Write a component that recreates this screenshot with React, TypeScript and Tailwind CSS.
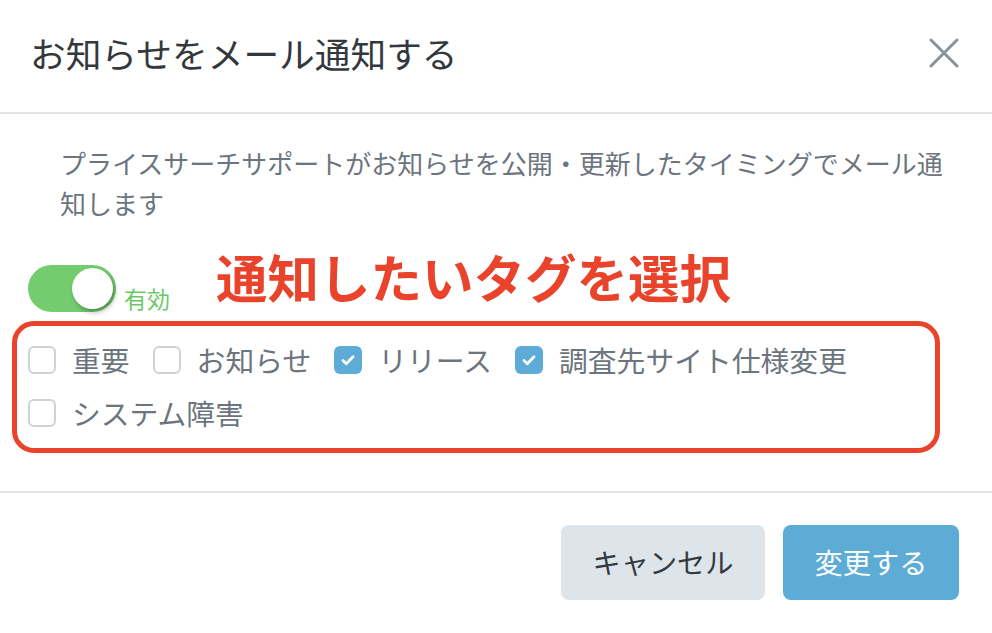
import { useState } from "react";

const tags = [
  { label: "重要", checked: false },
  { label: "お知らせ", checked: false },
  { label: "リリース", checked: true },
  { label: "調査先サイト仕様変更", checked: true },
  { label: "システム障害", checked: false },
];

function Checkbox({ checked }: { checked: boolean }) {
  if (checked) {
    return (
      <span className="flex h-[28px] w-[28px] shrink-0 items-center justify-center rounded-[6px] bg-[#5dabd7]">
        <svg width="18" height="18" viewBox="0 0 18 18" fill="none">
          <path d="M4 9.5l3.3 3.2L14 5.8" stroke="#fff" strokeWidth="2.8" strokeLinecap="round" strokeLinejoin="round" />
        </svg>
      </span>
    );
  }
  return <span className="h-[28px] w-[28px] shrink-0 rounded-[6px] border-2 border-[#cfd2d5] bg-white" />;
}

export default function App() {
  const [enabled] = useState(true);

  return (
    <div
      className="h-[633px] w-[992px] overflow-hidden bg-white text-[#343a40]"
      style={{ fontFamily: '"Noto Sans CJK JP", "Noto Sans", sans-serif' }}
    >
      <header className="flex h-[114px] items-center justify-between border-b-2 border-[#e1e5e9] pb-[6px] pl-[30px] pr-[32px]">
        <h1 className="text-[35.7px] font-normal leading-none text-[#33383d]">お知らせをメール通知する</h1>
        <button className="flex h-[32px] w-[32px] items-center justify-center">
          <svg width="30" height="30" viewBox="0 0 30 30" fill="none">
            <path d="M2 2l26 26M28 2L2 28" stroke="#8a939b" strokeWidth="3" strokeLinecap="round" />
          </svg>
        </button>
      </header>

      <section className="px-[12px] pt-[29px]">
        <p className="w-[944px] pl-[48px] text-[26px] leading-[40px] text-[#6c757d]">
          プライスサーチサポートがお知らせを公開・更新したタイミングでメール通知します
        </p>

        <div className="mt-[27px] flex items-end pl-[16px]">
          <span
            className={`relative flex h-[47px] w-[88px] items-center justify-end rounded-full px-[3px] ${
              enabled ? "bg-[#73cc6e]" : "bg-gray-300"
            }`}
          >
            <span className="h-[41px] w-[41px] rounded-full bg-white shadow-[2px_3px_5px_rgba(0,0,0,0.3)]" />
          </span>
          <span className="ml-[8px] text-[23px] leading-[28px] text-[#6cc867]">有効</span>
          <span className="mb-[10px] ml-[46px] text-[51.5px] font-bold leading-none text-[#e9442b]">
            通知したいタグを選択
          </span>
        </div>

        <div className="mt-[9px] flex w-[928px] flex-wrap rounded-[22px] border-[5px] border-[#e9442b] pb-[8px] pl-[11px] pt-[8px]">
          {tags.map((t) => (
            <label key={t.label} className="mr-[23px] flex h-[53px] items-center gap-[16px]">
              <Checkbox checked={t.checked} />
              <span className="text-[28.8px] leading-none text-[#6c757d]">{t.label}</span>
            </label>
          ))}
        </div>
      </section>

      <footer className="mt-[38px] flex justify-end gap-[18px] border-t-2 border-[#e1e5e9] px-[33px] pt-[32px]">
        <button className="h-[75px] w-[204px] rounded-[8px] bg-[#dee5ea] text-[28.2px] text-[#343a40]">キャンセル</button>
        <button className="h-[75px] w-[176px] rounded-[8px] bg-[#5dacd6] text-[28.2px] text-white">変更する</button>
      </footer>
    </div>
  );
}
